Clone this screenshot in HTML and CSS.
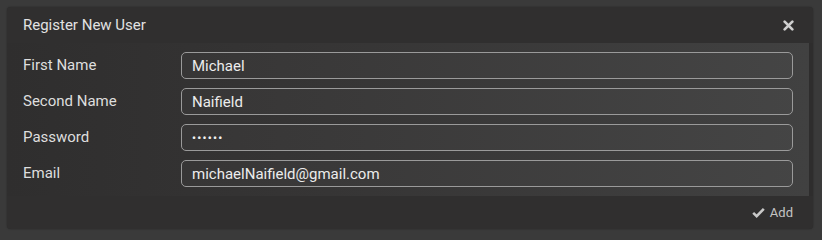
FILE: index.html
```html
<!DOCTYPE html>
<html>
<head>
<meta charset="utf-8">
<link rel="stylesheet" href="styles.css">
</head>
<body>
<div class="dialog">
  <div class="header">
    <span class="title">Register New User</span>
    <svg class="close" viewBox="0 0 10 10" width="11" height="11"><path d="M1.5 1.5 L8.5 8.5 M8.5 1.5 L1.5 8.5" stroke="#cfcfcf" stroke-width="2.4" stroke-linecap="round"/></svg>
  </div>
  <div class="content">
    <div class="row"><label class="label">First Name</label><div class="input">Michael</div></div>
    <div class="row"><label class="label">Second Name</label><div class="input">Naifield</div></div>
    <div class="row"><label class="label">Password</label><div class="input pw">••••••</div></div>
    <div class="row"><label class="label">Email</label><div class="input">michaelNaifield@gmail.com</div></div>
  </div>
  <div class="footer">
    <span class="add"><svg class="check" viewBox="0 0 14 12" width="13" height="11"><path d="M1.2 6.4 L5 10 L12.8 2" fill="none" stroke="#c8c8c8" stroke-width="2.8" stroke-linejoin="miter"/></svg>Add</span>
  </div>
</div>
</body>
</html>
```
FILE: styles.css
```css
html, body {
  margin: 0;
  padding: 0;
}
body {
  background: #3a3a3a;
  width: 822px;
  height: 238px;
  padding: 7px;
  box-sizing: border-box;
  font-family: Roboto, "Liberation Sans", sans-serif;
}
.dialog {
  width: 806px;
  height: 222px;
  background: #2e2d2d;
  border-radius: 4px;
  display: flex;
  flex-direction: column;
  box-shadow: 0 0 2px rgba(0,0,0,0.35);
}
.header {
  height: 36px;
  flex: none;
  display: flex;
  align-items: center;
  justify-content: space-between;
  padding: 0 19px 0 16px;
  background: #302f2f;
  border-radius: 4px 4px 0 0;
}
.title {
  color: #e2e2e2;
  font-size: 15px;
}
.close {
  display: block;
}
.content {
  width: 802px;
  box-sizing: border-box;
  padding: 9px 16px 9px 16px;
  display: flex;
  flex-direction: column;
  gap: 9px;
  background: linear-gradient(to right, #2f2e2e 0%, #363535 40%, #414141 100%);
}
.row {
  display: flex;
  align-items: center;
  height: 27px;
}
.label {
  width: 158px;
  flex: none;
  color: #dedede;
  font-size: 15px;
  position: relative;
  top: -1px;
}
.input {
  flex: 1;
  height: 27px;
  box-sizing: border-box;
  border: 1px solid #9a9a9a;
  border-radius: 5px;
  background: rgba(255,255,255,0.025);
  color: #ececec;
  font-size: 15px;
  padding: 0 10px;
  display: flex;
  align-items: center;
}
.input.pw {
  font-size: 11px;
  font-weight: 700;
  letter-spacing: 1.3px;
  padding-top: 1px;
  color: #f0f0f0;
}
.footer {
  flex: 1;
  display: flex;
  align-items: center;
  justify-content: flex-end;
  padding-right: 20px;
  background: #302f2f;
  border-radius: 0 0 4px 4px;
}
.add {
  display: flex;
  align-items: center;
  gap: 5px;
  color: #c4c4c4;
  font-size: 13px;
}
.check {
  display: block;
}
```
